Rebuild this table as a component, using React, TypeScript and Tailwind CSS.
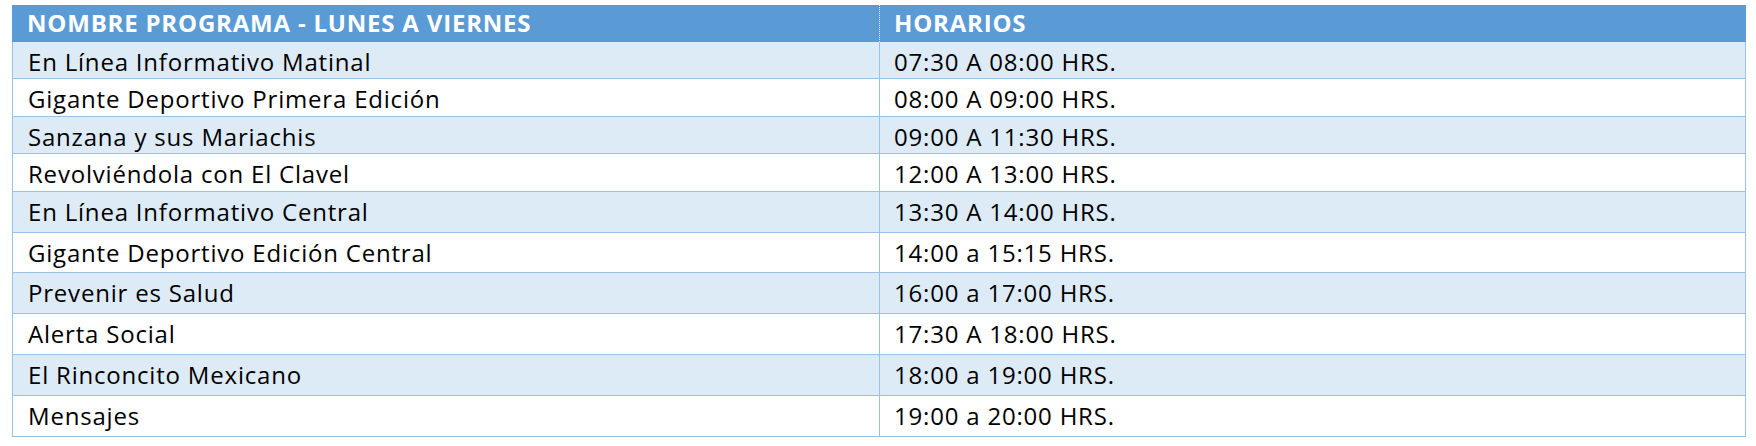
const programas = [
  { nombre: "En Línea Informativo Matinal", horario: "07:30 A 08:00 HRS.", h: "h-[37px]" },
  { nombre: "Gigante Deportivo Primera Edición", horario: "08:00 A 09:00 HRS.", h: "h-[38px]" },
  { nombre: "Sanzana y sus Mariachis", horario: "09:00 A 11:30 HRS.", h: "h-[37px]" },
  { nombre: "Revolviéndola con El Clavel", horario: "12:00 A 13:00 HRS.", h: "h-[38px]" },
  { nombre: "En Línea Informativo Central", horario: "13:30 A 14:00 HRS.", h: "h-[41px]" },
  { nombre: "Gigante Deportivo Edición Central", horario: "14:00 a 15:15 HRS.", h: "h-[40px]" },
  { nombre: "Prevenir es Salud", horario: "16:00 a 17:00 HRS.", h: "h-[41px]" },
  { nombre: "Alerta Social", horario: "17:30 A 18:00 HRS.", h: "h-[41px]" },
  { nombre: "El Rinconcito Mexicano", horario: "18:00 a 19:00 HRS.", h: "h-[41px]" },
  { nombre: "Mensajes", horario: "19:00 a 20:00 HRS.", h: "h-[41px]" },
];

export default function App() {
  return (
    <div className="h-[446px] w-[1756px] bg-white pl-[12px] pt-[5px] font-['Open_Sans',sans-serif] text-[24px] leading-[28px] tracking-[0.8px] text-black">
      <div className="w-[1734px]">
        {/* encabezado */}
        <div className="flex h-[37px] bg-[#5b9bd5] font-bold text-white">
          <div className="w-[867px] pl-[15px] pt-[4px]">NOMBRE PROGRAMA - LUNES A VIERNES</div>
          <div className="flex-1 border-l border-dotted border-white/80 pl-[14px] pt-[4px]">HORARIOS</div>
        </div>

        {programas.map((p, i) => (
          <div
            key={i}
            className={`flex border-x border-b border-[#9bc2e6] ${p.h} ${i % 2 ? "bg-white" : "bg-[#ddebf7]"}`}
          >
            <div className="w-[867px] border-r border-[#9bc2e6] pl-[15px] pt-[6px]">{p.nombre}</div>
            <div className="flex-1 pl-[14px] pt-[6px]">{p.horario}</div>
          </div>
        ))}
      </div>
    </div>
  );
}
